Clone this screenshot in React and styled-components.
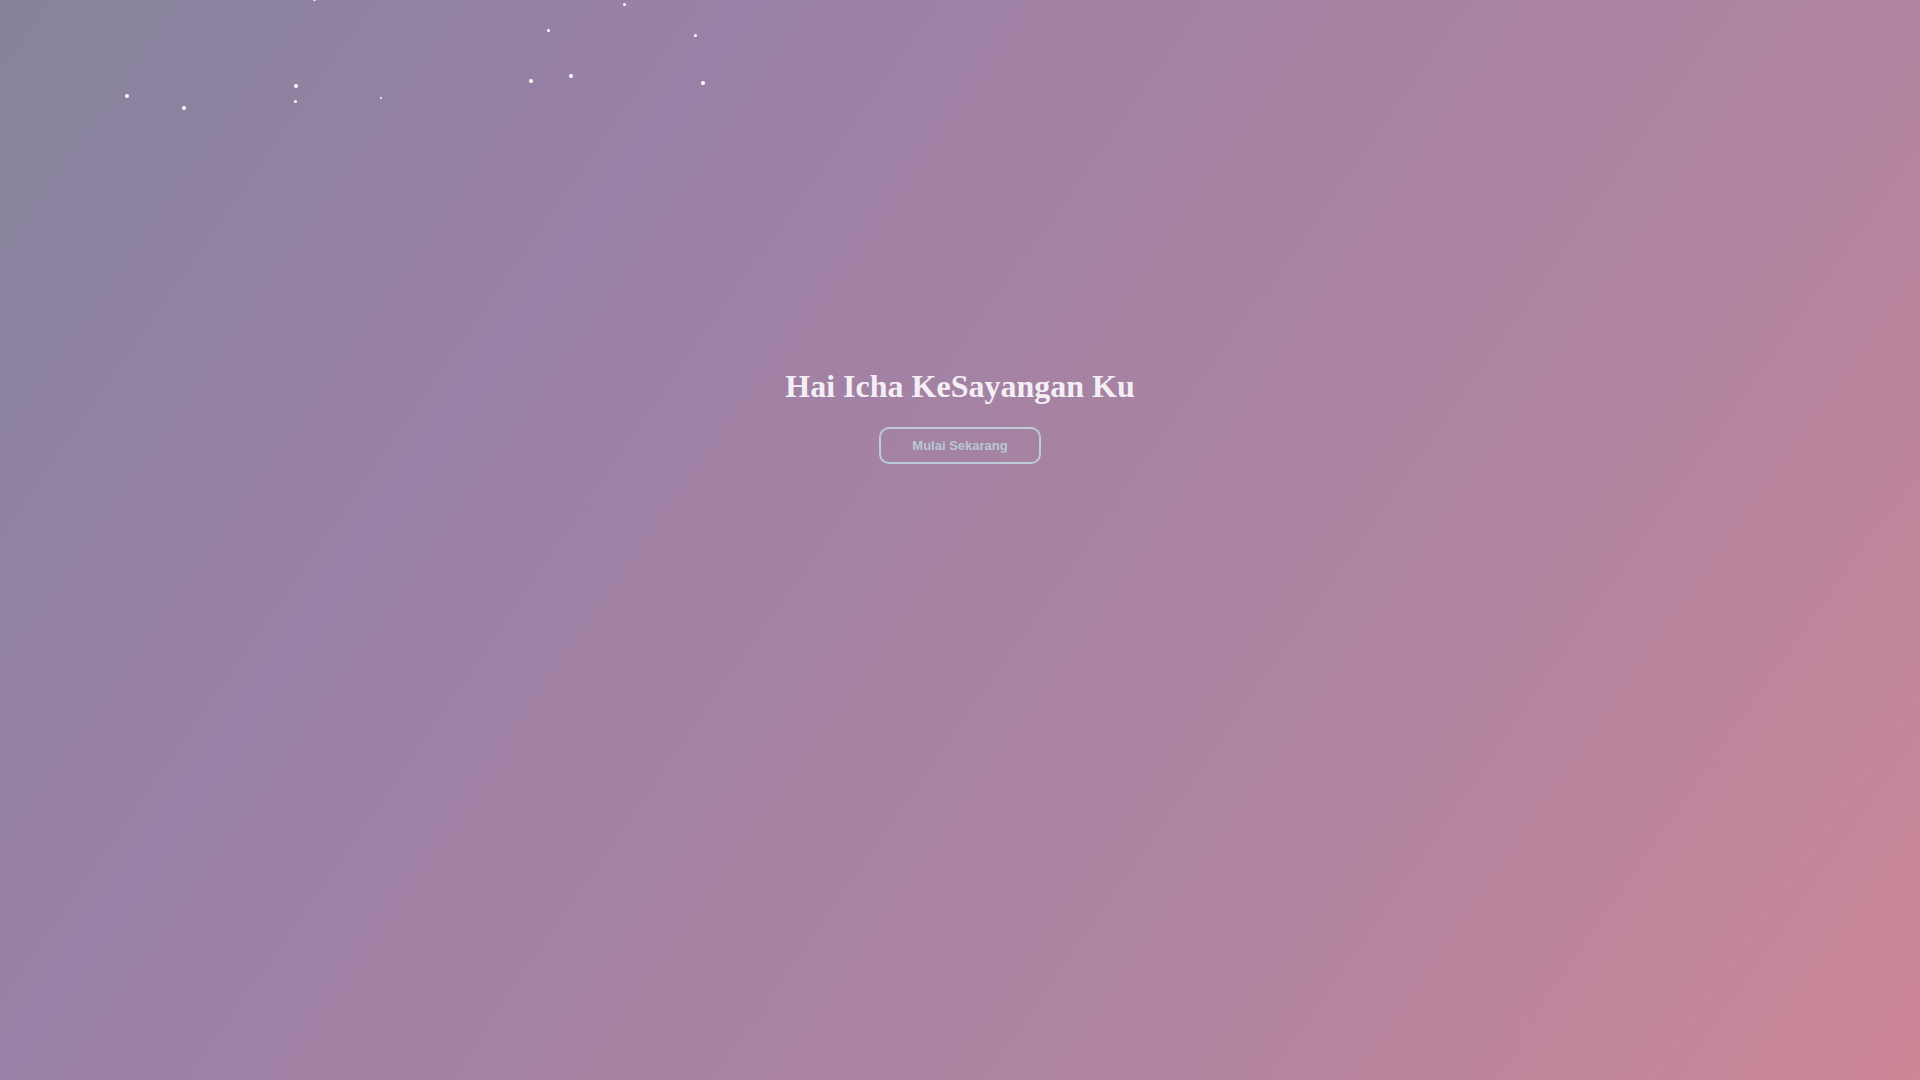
import React from 'react';
import styled, { createGlobalStyle } from 'styled-components';

const GlobalStyle = createGlobalStyle`
  html, body {
    margin: 0;
    padding: 0;
    height: 100%;
  }
  body {
    font-family: "Liberation Serif", "Times New Roman", serif;
    overflow: hidden;
  }
`;

// star positions (x, y, size) across the top of the sky
const stars = [
  [314, -1, 3],
  [624, 4, 3],
  [548, 30, 3],
  [695, 35, 3],
  [127, 96, 4],
  [184, 108, 4],
  [296, 86, 4],
  [295, 101, 3],
  [381, 98, 2],
  [531, 81, 4],
  [571, 76, 4],
  [703, 83, 4],
];

const Page = styled.div`
  position: relative;
  width: 100vw;
  height: 100vh;
  overflow: hidden;
  background: linear-gradient(
    125deg,
    #85849c 0%,
    #9a80a6 28%,
    #b285a0 72%,
    #cc8696 100%
  );
`;

const Star = styled.span`
  position: absolute;
  left: ${p => p.$x - p.$size / 2}px;
  top: ${p => p.$y - p.$size / 2}px;
  width: ${p => p.$size}px;
  height: ${p => p.$size}px;
  border-radius: 50%;
  background: #ffffff;
`;

const Hero = styled.main`
  display: flex;
  flex-direction: column;
  align-items: center;
  padding-top: 368px;
`;

const Title = styled.h1`
  margin: 0 0 23px;
  font-family: "Liberation Serif", "Times New Roman", serif;
  font-size: 32px;
  line-height: 36px;
  font-weight: 700;
  color: #f4eff4;
`;

const StartButton = styled.button`
  box-sizing: border-box;
  height: 37px;
  padding: 0 31px;
  border: 2px solid #bccdd7;
  border-radius: 10px;
  background: transparent;
  color: #b8c8d3;
  font-family: "Liberation Sans", Arial, sans-serif;
  font-size: 13px;
  font-weight: 700;
  line-height: 15px;
  cursor: pointer;
`;

export default function App() {
  return (
    <>
      <GlobalStyle />
      <Page>
        {stars.map(([x, y, size], i) => (
          <Star key={i} $x={x} $y={y} $size={size} />
        ))}
        <Hero>
          <Title>Hai Icha KeSayangan Ku</Title>
          <StartButton>Mulai Sekarang</StartButton>
        </Hero>
      </Page>
    </>
  );
}
